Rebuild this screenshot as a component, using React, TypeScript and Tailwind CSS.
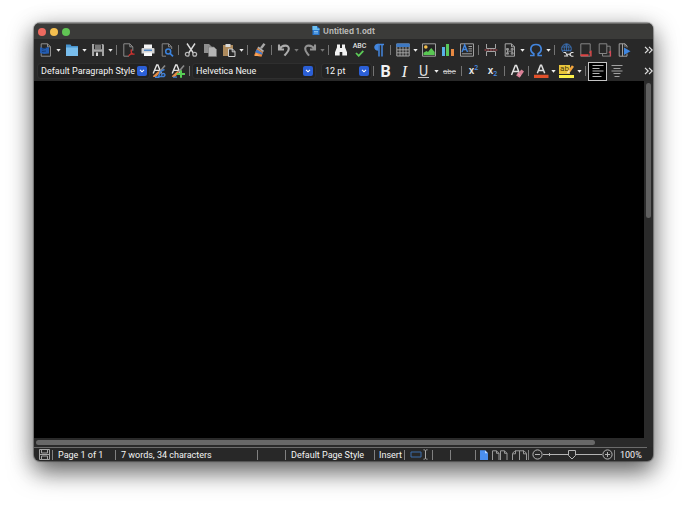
import type { ReactNode } from "react";

type IconProps = { children: ReactNode };

function Icon({ children }: IconProps) {
  return (
    <svg viewBox="0 0 14 14" className="size-[14px] shrink-0 overflow-visible" fill="none" aria-hidden="true">
      {children}
    </svg>
  );
}

function Tool({ label, children, active = false }: { label: string; children: ReactNode; active?: boolean }) {
  return (
    <button
      type="button"
      aria-label={label}
      aria-pressed={active || undefined}
      className={
        active
          ? "flex h-[19px] w-[19px] shrink-0 items-center justify-center border border-[#c4c4c4] bg-black"
          : "flex h-[19px] w-[19px] shrink-0 items-center justify-center"
      }
    >
      {children}
    </button>
  );
}

function Arrow({ label, dim = false }: { label: string; dim?: boolean }) {
  return (
    <button type="button" aria-label={label} className="flex h-[19px] w-[7px] shrink-0 items-center justify-center">
      <svg viewBox="0 0 5 3" className={dim ? "h-[3px] w-[5px] text-[#777]" : "h-[3px] w-[5px] text-[#eee]"} aria-hidden="true">
        <path d="M0.3 0h4.4L2.5 2.8z" fill="currentColor" />
      </svg>
    </button>
  );
}

function Sep() {
  return (
    <span className="flex w-[5px] shrink-0 justify-center">
      <span className="h-[10px] w-px bg-[#747474]" />
    </span>
  );
}

function Combo({ label, value, className }: { label: string; value: string; className: string }) {
  return (
    <div className={`relative h-[14px] shrink-0 rounded-[3px] bg-[#222222] ring-1 ring-[#2f2f2f] ${className}`}>
      <select
        aria-label={label}
        className="block h-[14px] w-full appearance-none bg-transparent pl-[3px] text-[9px] leading-[14px] text-[#f4f4f4] outline-none"
      >
        <option>{value}</option>
      </select>
      <span className="pointer-events-none absolute top-[2px] right-[2px] flex size-[10px] items-center justify-center rounded-[2px] bg-[#2b5fd6]">
        <svg viewBox="0 0 6 4" className="h-[4px] w-[6px]" fill="none" aria-hidden="true">
          <path d="M1 0.8l2 2 2-2" stroke="#fff" strokeWidth="1.1" />
        </svg>
      </span>
    </div>
  );
}

function More({ label }: { label: string }) {
  return (
    <button type="button" aria-label={label} className="ml-auto flex h-[19px] w-[10px] shrink-0 items-center justify-center">
      <svg viewBox="0 0 9 8" className="h-[8px] w-[9px]" fill="none" stroke="#e0e0e0" strokeWidth="1.2" aria-hidden="true">
        <path d="M1 .8l3.200 3.200L1 7.200M5 .8l3.200 3.200L5 7.200" />
      </svg>
    </button>
  );
}

const PAGE = "M2.2 0.8h6.3l3 3v9.4H2.2z";
const CHAR = "M1.2 9.6L4.7 1h1.2l3.4 8.6M2.7 6.4h5.2";

function StandardBar() {
  return (
    <div role="toolbar" aria-label="Standard" className="flex h-[22px] items-center pl-[2px]">
      <Tool label="New">
        <Icon>
          <path d={PAGE} stroke="#8f8f8f" />
          <path d="M8.5 0.8v3h3" stroke="#8f8f8f" />
          <path d="M1 4.2l4 1 5-1.2v6.500L5 11 1 10z" fill="#245cb0" />
          <path d="M3 6.200l4-1M3 8.500l4-.5" stroke="#173c74" />
        </Icon>
      </Tool>
      <Arrow label="New options" />
      <Tool label="Open">
        <Icon>
          <path d="M1 1.500h4.500l1 1.500H13v9H1z" fill="#4794cf" />
          <path d="M1 4.500h12V13H1z" fill="#78bdec" />
        </Icon>
      </Tool>
      <Arrow label="Open options" />
      <Tool label="Save">
        <Icon>
          <path d="M1 1h11l1 1v11H1z" fill="#a6a6a6" />
          <path d="M3 1.300h8v5H3z" fill="#292929" />
          <path d="M4 3h6M4 5h6" stroke="#c6c6c6" />
          <path d="M3 8.800h8V13H3z" fill="#333" />
          <path d="M5 9.500h2V13H5z" fill="#ddd" />
        </Icon>
      </Tool>
      <Arrow label="Save options" />
      <Sep />
      <Tool label="Export as PDF">
        <Icon>
          <path d="M7 13.200H1.800V0.800h6l3 3v4" stroke="#8a8a8a" />
          <path d="M7.800 0.800v3h3" stroke="#8a8a8a" />
          <path d="M9.200 6.500c-.6 3 1 4.700 3.300 5M9.300 6.500c.8 2.800-.5 5.200-2.800 6.500M7 12c2-1.300 3.500-1.500 5.500-1" stroke="#c8322f" strokeWidth="1.200" />
        </Icon>
      </Tool>
      <Tool label="Print">
        <Icon>
          <path d="M3 1.500h8V6H3z" fill="#f4f4f4" />
          <path d="M1.500 5h11q1 0 1 1v4.500H.5V6q0-1 1-1z" fill="#d2d2d2" />
          <path d="M3 6.500h8v1.500H3z" fill="#4f86c4" />
          <path d="M3 9.500h8V13H3z" fill="#fafafa" />
        </Icon>
      </Tool>
      <Tool label="Print preview">
        <Icon>
          <path d="M6 13.200H2.200V.8h6.500l3 3V6" stroke="#858585" />
          <path d="M8.500.8v3h3" stroke="#858585" />
          <circle cx="8.200" cy="8.500" r="2.500" stroke="#3b82dc" strokeWidth="1.500" />
          <path d="M10 10.300l3 3" stroke="#3b82dc" strokeWidth="1.800" />
        </Icon>
      </Tool>
      <Sep />
      <Tool label="Cut">
        <Icon>
          <path d="M3 .5l6.300 9.500M11 .5L4.700 10" stroke="#dadada" strokeWidth="1.400" />
          <circle cx="3.300" cy="11.200" r="1.900" stroke="#b5b5b5" strokeWidth="1.300" />
          <circle cx="10.700" cy="11.200" r="1.900" stroke="#b5b5b5" strokeWidth="1.300" />
        </Icon>
      </Tool>
      <Tool label="Copy">
        <Icon>
          <path d="M1 1h5l2.500 2.500V10H1z" fill="#8f8f8f" />
          <path d="M5.500 4H11l2.500 2.500v7h-8z" fill="#b4b4b4" stroke="#777" strokeWidth=".6" />
        </Icon>
      </Tool>
      <Tool label="Paste">
        <Icon>
          <path d="M1 2h10v11H1z" fill="#ad8a5c" />
          <path d="M3.500 1h5v3h-5z" fill="#dadada" />
          <path d="M6.500 6h4l2.500 2.500v5H6.500z" fill="#282828" stroke="#d0d0d0" />
          <path d="M10.200 6v2.800H13" stroke="#d0d0d0" />
        </Icon>
      </Tool>
      <Arrow label="Paste options" />
      <Sep />
      <Tool label="Clone formatting">
        <Icon>
          <path d="M11.500 .8L8 5.200" stroke="#a8a8a8" strokeWidth="2.400" />
          <path d="M5.500 3.600l5.500 4.200-1 1.400L4.300 5z" fill="#b0b0b0" />
          <path d="M4.300 5l5.700 4.200L8.500 13.800 1 12.500z" fill="#ee8a3c" />
          <path d="M3.600 6.300l6 3.700-.6 1.800-6.800-2.500z" fill="#4078c8" />
          <path d="M3.500 10l-2 3h5z" fill="#f5a35c" />
        </Icon>
      </Tool>
      <Sep />
      <Tool label="Undo">
        <Icon>
          <path d="M2 1.500v5h5M2.500 6C5 2 11.800 1 11.800 5.800c0 3-2.500 4.200-4.300 6.900" stroke="#acacac" strokeWidth="2.100" />
        </Icon>
      </Tool>
      <Arrow label="Undo history" dim />
      <Tool label="Redo">
        <Icon>
          <path d="M12 1.500v5H7M11.500 6C9 2 2.200 1 2.200 5.800c0 3 2 4.200 3.800 6.900" stroke="#929292" strokeWidth="2.100" />
        </Icon>
      </Tool>
      <Arrow label="Redo history" dim />
      <Sep />
      <Tool label="Find and replace">
        <Icon>
          <path d="M3 1.500h3V5h2V1.500h3v2.700l2 5v3.300H8.300V9H5.700v3.500H1V9.200l2-5z" fill="#f2f2f2" />
        </Icon>
      </Tool>
      <Tool label="Spelling">
        <span className="flex flex-col items-center">
          <span className="text-[7px] leading-[7px] font-medium text-[#e0e0e0]">ABC</span>
          <svg viewBox="0 0 9 7" className="h-[7px] w-[9px]" fill="none" aria-hidden="true">
            <path d="M1 3l2.700 2.800L8.300.8" stroke="#5ccb57" strokeWidth="1.800" />
          </svg>
        </span>
      </Tool>
      <Tool label="Formatting marks">
        <Icon>
          <path d="M6.500 .8C.8 .8 .8 7.800 6.500 7.800z" fill="#4386de" />
          <path d="M5.500 1.500H12M7 1.500V13.500M10 1.500V13.500" stroke="#4386de" strokeWidth="1.500" />
        </Icon>
      </Tool>
      <Sep />
      <Tool label="Insert table">
        <Icon>
          <path d="M.8 1h12.400v12H.8z" fill="#353535" stroke="#a6a6a6" />
          <path d="M.3.500h13.400V4H.3z" fill="#3d79c4" />
          <path d="M1 6.800h12M1 9.800h12M4 4v9M7 4v9M10 4v9" stroke="#b2b2b2" strokeWidth=".8" />
        </Icon>
      </Tool>
      <Arrow label="Table size" />
      <Tool label="Insert image">
        <Icon>
          <path d="M.500.800h13v12.400H.500z" fill="#242424" stroke="#a0a0a0" />
          <circle cx="3.800" cy="4" r="1.800" fill="#f3bd4a" />
          <path d="M1.500 12v-2.200l3-1.800 1.500 1 3.200-4 3.500 4V12z" fill="#59c753" />
        </Icon>
      </Tool>
      <Tool label="Insert chart">
        <Icon>
          <path d="M1 4h3v9H1z" fill="#59b0e8" />
          <path d="M5 1h3v12H5z" fill="#58c85a" />
          <path d="M10 6h3v7h-3z" fill="#e88a43" />
        </Icon>
      </Tool>
      <Tool label="Insert text box">
        <Icon>
          <path d="M.500.800h13v12.400H.500z" stroke="#a0a0a0" />
          <path d="M2 9L4.700 2l2.800 7M3 6.500h3.500" stroke="#4386de" strokeWidth="1.400" />
          <path d="M8.500 3.500H12M8.500 5.800H12M8.500 8H12M2 10.800h10" stroke="#a0a0a0" />
        </Icon>
      </Tool>
      <Sep />
      <Tool label="Insert page break">
        <Icon>
          <path d="M2.500 1v4.500h9V1M2.500 13V8.500h9V13" stroke="#a2a2a2" />
          <path d="M.500 7H14" stroke="#c9525b" strokeDasharray="2 .7" />
        </Icon>
      </Tool>
      <Tool label="Insert field">
        <Icon>
          <path d={PAGE} stroke="#a5a5a5" />
          <path d="M8.500.8v3h3" stroke="#a5a5a5" />
          <path d="M4.500 5.500v5.500M9.200 5.500v5.500M4.500 8.200h4.700M3.500 5.500h2v1.500h-2zM8.200 5.500h2v1.500h-2zM3.500 9.700h2v1.500h-2zM8.200 9.700h2v1.500h-2z" stroke="#a5a5a5" strokeWidth=".8" />
        </Icon>
      </Tool>
      <Arrow label="Field options" />
      <Tool label="Insert special character">
        <Icon>
          <path d="M1 12.500h3.800v-1.700C.2 8 1 1.500 7 1.500s6.800 6.500 2.200 9.300v1.700H13" stroke="#4386de" strokeWidth="1.700" />
        </Icon>
      </Tool>
      <Arrow label="Special characters" />
      <Sep />
      <Tool label="Insert hyperlink">
        <Icon>
          <circle cx="6.500" cy="5.700" r="4.800" stroke="#3b74bd" />
          <path d="M6.500 1v9.500M2 4h9M2 7.400h9M6.500.9c-3 2.500-3 7 0 9.600M6.500.9c3 2.500 3 7 0 9.600" stroke="#3b74bd" strokeWidth=".8" />
          <path d="M3.500 8.500h10.500v5.500H3.500z" fill="#282828" />
          <path d="M3.500 9.500h2l2 3.500H4M13.500 9.500h-2l-2 1.700M9.500 11.800l2 1.400h2M6 11.200h5" stroke="#ddd" strokeWidth="1.100" />
        </Icon>
      </Tool>
      <Tool label="Insert footnote">
        <Icon>
          <path d="M1.800.8h9.400v12.400H1.800z" stroke="#858585" />
          <path d="M1.500 12.200h8" stroke="#dc4444" strokeWidth="2" />
          <path d="M10.300 9.500l1.700-1v5" stroke="#dc4444" strokeWidth="1.300" />
        </Icon>
      </Tool>
      <Tool label="Insert endnote">
        <Icon>
          <path d="M1.200.8h7.600v9.700H1.200z" stroke="#858585" />
          <path d="M9 3.200h3.200v9.900H4.500v-2.500" stroke="#858585" />
          <path d="M10.800 9.500l1.700-1v5" stroke="#cf4a59" strokeWidth="1.200" />
        </Icon>
      </Tool>
      <Tool label="Insert bookmark">
        <Icon>
          <path d="M10 10.500v2.700H2.200V.8h5.800L10 3V4.500" stroke="#a0a0a0" />
          <path d="M5.500.8v12.400M8 .8v3" stroke="#a0a0a0" />
          <path d="M7 4.500l6.500 3.800L7 12z" fill="#3f86e0" />
        </Icon>
      </Tool>
      <More label="More standard tools" />
    </div>
  );
}

function FormattingBar() {
  return (
    <div role="toolbar" aria-label="Formatting" className="flex h-[20px] items-center pl-[4px]">
      <Combo label="Paragraph style" value="Default Paragraph Style" className="w-[111px]" />
      <Tool label="Update style">
        <Icon>
          <path d={CHAR} stroke="#e2e2e2" strokeWidth="1.400" />
          <path d="M13 1.500L7.500 8" stroke="#8a8a8a" strokeWidth="1.600" />
          <path d="M6.500 7l-5 4.500L1 13h3l4-4.500z" fill="#e48b43" />
          <path d="M12.500 5.500C7 7 8 9.500 6.500 12.500h5.500c1.500-1 1.200-3-.7-3-1.300 0-1.800 1-1.600 2M3 13.200h4.500" stroke="#3f80d8" strokeWidth="1.400" />
        </Icon>
      </Tool>
      <Tool label="New style">
        <Icon>
          <path d={CHAR} stroke="#e2e2e2" strokeWidth="1.400" />
          <path d="M13 1.500L7.500 8" stroke="#8a8a8a" strokeWidth="1.600" />
          <path d="M6.500 7l-5 4.500L1 13h3l4-4.500z" fill="#e48b43" />
          <path d="M2 13.200h4" stroke="#3f80d8" strokeWidth="1.200" />
          <path d="M10 6.200v7.600M6 10h8" stroke="#57ce54" strokeWidth="2" />
        </Icon>
      </Tool>
      <Sep />
      <Combo label="Font name" value="Helvetica Neue" className="ml-px w-[122px]" />
      <Combo label="Font size" value="12 pt" className="ml-[7px] w-[49px]" />
      <Sep />
      <Tool label="Bold">
        <span className="text-[16px] leading-[19px] font-bold text-[#f2f2f2]">B</span>
      </Tool>
      <Tool label="Italic">
        <span className="font-['Liberation_Serif',serif] text-[16px] leading-[19px] text-[#f2f2f2] italic">I</span>
      </Tool>
      <Tool label="Underline">
        <span className="flex w-[11px] justify-center border-b border-[#c8c8c8] text-[14px] leading-[12px] text-[#e2e2e2]">U</span>
      </Tool>
      <Arrow label="Underline style" />
      <Tool label="Strikethrough">
        <span className="text-[8px] leading-[19px] text-[#c0c0c0] line-through">abc</span>
      </Tool>
      <Sep />
      <Tool label="Superscript">
        <span className="flex h-[12px] text-[11px] leading-[12px] font-medium text-[#e8e8e8]">
          x<span className="text-[7px] leading-[6px] text-[#4a90ea]">2</span>
        </span>
      </Tool>
      <Tool label="Subscript">
        <span className="flex h-[12px] items-end text-[11px] leading-[12px] font-medium text-[#e8e8e8]">
          x<span className="text-[7px] leading-[6px] text-[#4a90ea]">2</span>
        </span>
      </Tool>
      <Sep />
      <Tool label="Clear formatting">
        <Icon>
          <path d="M1.500 11L5.300 1.500h1.200L10 11M3 7.500h5.500" stroke="#e2e2e2" strokeWidth="1.500" />
          <path d="M11.500 5.500l2.500 2-4.500 6.200-3.500-2.500z" fill="#d98096" />
          <path d="M7.500 9.300l3.200 2.600" stroke="#f0b3c0" />
        </Icon>
      </Tool>
      <Sep />
      <Tool label="Font color">
        <Icon>
          <path d="M3.300 9.200L6.500 1.200h1l3.200 8M4.500 6.500h5" stroke="#dedede" strokeWidth="1.500" />
          <path d="M0 10.700h14.500V14H0z" fill="#e2512b" />
        </Icon>
      </Tool>
      <Arrow label="Font color palette" />
      <Tool label="Highlighting color">
        <span className="relative flex h-[14px] w-[15px] flex-col border-b-[3px] border-[#fbf04a]">
          <span className="mt-px h-[9px] w-[11px] bg-[#e8c53c] text-center text-[8px] leading-[8px] text-[#4a3b10]">ab</span>
          <svg viewBox="0 0 8 9" className="absolute top-px right-0 h-[9px] w-[8px]" fill="none" aria-hidden="true">
            <path d="M7 1L3 6.500" stroke="#f3a63e" strokeWidth="2.600" />
            <path d="M3.500 5.500L1.500 8" stroke="#f7e3b0" strokeWidth="1.600" />
          </svg>
        </span>
      </Tool>
      <Arrow label="Highlighting palette" />
      <Sep />
      <Tool label="Align left" active>
        <Icon>
          <path d="M1.500 1.500h11M1.500 4.500h7M1.500 7h11M1.500 9.500h7M1.500 12.500h9" stroke="#b5b5b5" strokeWidth="1.200" />
        </Icon>
      </Tool>
      <Tool label="Align center">
        <Icon>
          <path d="M1.500 1.500h11M3.500 4.500h7M1.500 7h11M3.500 9.500h7M4.500 12.500h5" stroke="#a0a0a0" strokeWidth="1.200" />
        </Icon>
      </Tool>
      <More label="More formatting tools" />
    </div>
  );
}

function Divider() {
  return <span className="h-[10px] w-px shrink-0 bg-[#808080]" />;
}

function StatusBar() {
  return (
    <footer className="mr-[6px] flex h-[14px] items-center border-t border-[#6c6c6c] pl-[5px] text-[9px] leading-[12px] whitespace-nowrap text-[#f4f4f4]">
      <svg viewBox="0 0 11 11" className="mr-[2px] size-[11px] shrink-0" fill="none" stroke="#a6a6a6" aria-hidden="true">
        <path d="M.5.5h10v10H.5zM2.500.5v3.500h6V.5M2.500 10.500V7h6v3.500M1 5.500h9" />
      </svg>
      <Divider />
      <span className="w-[62px] shrink-0 pl-[5px]">Page 1 of 1</span>
      <Divider />
      <span className="min-w-[100px] flex-1 pl-[5px]">7 words, 34 characters</span>
      <Divider />
      <span className="w-[27px] shrink-0" />
      <Divider />
      <span className="w-[88px] shrink-0 pl-[5px]">Default Page Style</span>
      <Divider />
      <span className="w-[29px] shrink-0 pl-[4px]">Insert</span>
      <Divider />
      <svg viewBox="0 0 27 11" className="h-[11px] w-[27px] shrink-0" fill="none" aria-hidden="true">
        <path d="M6 3h10v5H6z" stroke="#3a6cab" />
        <path d="M18.500.8c1.500 0 2 .4 2 1.200 0-.8.5-1.200 2-1.200M18.500 10.200c1.500 0 2-.4 2-1.200 0 .8.5 1.200 2 1.200M20.500 2v7" stroke="#a8a8a8" />
      </svg>
      <Divider />
      <span className="w-[17px] shrink-0" />
      <Divider />
      <span className="w-[24px] shrink-0" />
      <Divider />
      <span className="flex w-[52px] shrink-0 items-center gap-[4px] pl-[4px]">
        <button type="button" aria-label="Single-page view">
          <svg viewBox="0 0 8 10" className="block h-[10px] w-[8px]" aria-hidden="true">
            <path d="M0 .3h5l3 3V10H0z" fill="#4b8fee" />
            <path d="M5 .3v3h3z" fill="#b9d4fb" />
          </svg>
        </button>
        <button type="button" aria-label="Multiple-page view">
          <svg viewBox="0 0 16 10" className="block h-[10px] w-[16px]" fill="none" stroke="#9a9a9a" aria-hidden="true">
            <path d="M.5 10V.8h4l2.500 2.500V10M4.500.8v2.500H7M8.500 10V.8h4L15 3.300V10M12.500.8v2.500H15" />
          </svg>
        </button>
        <button type="button" aria-label="Book view">
          <svg viewBox="0 0 15 10" className="block h-[10px] w-[15px]" fill="none" stroke="#9a9a9a" aria-hidden="true">
            <path d="M.5 10V3.300L3 .8h9l2.500 2.500V10M7.500.8V10M3.500 .8v3H.8M11.500 .8v3h2.700" />
          </svg>
        </button>
      </span>
      <Divider />
      <button type="button" aria-label="Zoom out" className="ml-[3px] shrink-0">
        <svg viewBox="0 0 11 11" className="block size-[11px]" fill="none" stroke="#b4b4b4" aria-hidden="true">
          <circle cx="5.500" cy="5.500" r="4.600" />
          <path d="M3 5.500h5" />
        </svg>
      </button>
      <label className="relative h-[11px] w-[59px] shrink-0">
        <svg viewBox="0 0 59 11" className="block h-[11px] w-[59px]" fill="none" stroke="#b4b4b4" aria-hidden="true">
          <path d="M0 5.500h25M33 5.500h26M6.500 4v3" />
          <path d="M25.500 1.500h7v5L29 10l-3.500-3.500z" />
        </svg>
        <input type="range" aria-label="Zoom" defaultValue={50} className="absolute inset-0 h-full w-full opacity-0" />
      </label>
      <button type="button" aria-label="Zoom in" className="mr-px shrink-0">
        <svg viewBox="0 0 11 11" className="block size-[11px]" fill="none" stroke="#b4b4b4" aria-hidden="true">
          <circle cx="5.500" cy="5.500" r="4.600" />
          <path d="M3 5.500h5M5.500 3v5" />
        </svg>
      </button>
      <Divider />
      <span className="w-[32px] shrink-0 pl-[5px]">100%</span>
    </footer>
  );
}

export default function App() {
  return (
    <div className="flex min-h-screen flex-col bg-white px-[34px] pt-[23px] pb-[44px] font-['Roboto','Liberation_Sans',sans-serif]">
      <main className="flex flex-1 flex-col overflow-hidden rounded-[6px] bg-[#282828] shadow-[0_0_1px_1px_rgba(0,0,0,0.35),0_11px_24px_rgba(0,0,0,0.55),0_4px_26px_rgba(0,0,0,0.2)]">
        <header className="grid h-[16px] grid-cols-[1fr_auto_1fr] items-center border-t border-[#6a6a68] bg-[#3b3b39]">
          <div className="flex gap-[4px] pl-[4px]">
            <button type="button" aria-label="Close" className="size-[8px] rounded-full bg-[#ed6a5f]" />
            <button type="button" aria-label="Minimize" className="size-[8px] rounded-full bg-[#f5bf4f]" />
            <button type="button" aria-label="Zoom window" className="size-[8px] rounded-full bg-[#61c554]" />
          </div>
          <h1 className="flex items-center gap-[3px] pb-[2px] font-['Inter',sans-serif] text-[8px] leading-[12px] font-bold text-[#b8b8b6]">
            <svg viewBox="0 0 8 9" className="h-[9px] w-[8px]" aria-hidden="true">
              <path d="M.5 0H5l2.500 2.500V9h-7z" fill="#2a78cf" />
              <path d="M.5 0H5v2.500h2.500V4h-7z" fill="#6cc0f2" />
              <path d="M2 5.500h4M2 7h4" stroke="#a8d8f8" strokeWidth=".7" />
            </svg>
            Untitled 1.odt
          </h1>
        </header>
        <StandardBar />
        <FormattingBar />
        <div className="flex flex-1">
          <section aria-label="Document" className="flex-1 bg-black" />
          <div className="flex w-[9px] flex-col items-center bg-[#2a2a2a] pt-[2px]">
            <div className="h-[38%] w-[5px] rounded-full bg-[#606060]" />
          </div>
        </div>
        <div className="flex h-[9px] items-center bg-[#2a2a2a] pr-[9px] pl-[2px]">
          <div className="h-[5px] w-[92%] rounded-full bg-[#686868]" />
        </div>
        <StatusBar />
      </main>
    </div>
  );
}
